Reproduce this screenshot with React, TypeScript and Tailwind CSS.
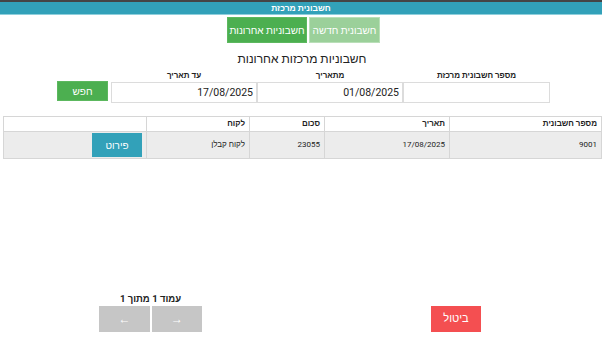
import React from "react";

export default function App() {
  const font = { fontFamily: 'Roboto, "Liberation Sans", "Open Sans", sans-serif' };
  return (
    <div dir="rtl" style={font} className="w-[602px] h-[339px] bg-white flex flex-col overflow-hidden text-[#222]">
      <div className="h-[2px] bg-[#454545] shrink-0" />
      <div className="h-[13px] bg-[#32a1b9] border-b border-[#8fcfdc] flex items-center justify-center shrink-0">
        <span className="text-white text-[8.5px] font-bold leading-none">חשבונית מרכזת</span>
      </div>
      <div className="flex justify-center gap-[2px] mt-[2px] pl-[5px]">
        <div className="w-[71px] h-[26px] bg-[#9bd09a] border border-[#b9dfb8] text-white text-[10px] whitespace-nowrap flex items-center justify-center">חשבונית חדשה</div>
        <div className="w-[80px] h-[26px] bg-[#4caf50] border border-[#5cb85f] text-white text-[10px] whitespace-nowrap flex items-center justify-center">חשבוניות אחרונות</div>
      </div>
      <div className="text-center text-[12px] leading-none mt-[10px] pl-[2px] text-[#222]">חשבוניות מרכזות אחרונות</div>
      <div className="flex items-end mt-[7px] pr-[52px]">
        <div className="w-[147px] flex flex-col items-center">
          <span className="text-[8px] font-bold leading-none mb-[2px]">מספר חשבונית מרכזת</span>
          <div className="w-full h-[21px] border border-[#dcdcdc] bg-white" />
        </div>
        <div className="w-[146px] flex flex-col items-center">
          <span className="text-[8px] font-bold leading-none mb-[2px]">מתאריך</span>
          <div className="w-full h-[21px] border border-[#dcdcdc] bg-white flex items-center px-[3px] text-[10.5px]">01/08/2025</div>
        </div>
        <div className="w-[146px] flex flex-col items-center">
          <span className="text-[8px] font-bold leading-none mb-[2px]">עד תאריך</span>
          <div className="w-full h-[21px] border border-[#dcdcdc] bg-white flex items-center px-[3px] text-[10.5px]">17/08/2025</div>
        </div>
        <div className="w-[51px] h-[20px] mr-[3px] mb-[2px] bg-[#4caf50] border border-[#5cb85f] text-white text-[10px] flex items-center justify-center">חפש</div>
      </div>
      <div className="mt-[13px] ml-[3px] border border-[#d6d6d6] text-[8px]">
        <div className="flex h-[14px] bg-white font-bold items-center">
          <div className="w-[152px] h-full border-l border-[#d6d6d6] px-[4px] flex items-center">מספר חשבונית</div>
          <div className="w-[125px] h-full border-l border-[#d6d6d6] px-[4px] flex items-center">תאריך</div>
          <div className="w-[75px] h-full border-l border-[#d6d6d6] px-[4px] flex items-center">סכום</div>
          <div className="w-[103px] h-full border-l border-[#d6d6d6] px-[4px] flex items-center">לקוח</div>
          <div className="flex-1 h-full" />
        </div>
        <div className="flex h-[27px] bg-[#ececec] border-t border-[#d6d6d6] items-center">
          <div className="w-[152px] h-full border-l border-[#d6d6d6] px-[4px] flex items-center">9001</div>
          <div className="w-[125px] h-full border-l border-[#d6d6d6] px-[4px] flex items-center">17/08/2025</div>
          <div className="w-[75px] h-full border-l border-[#d6d6d6] px-[4px] flex items-center">23055</div>
          <div className="w-[103px] h-full border-l border-[#d6d6d6] px-[4px] flex items-center">לקוח קבלן</div>
          <div className="flex-1 h-full flex items-center pr-[4px]">
            <div className="w-[50px] h-[24px] bg-[#32a1b9] text-white text-[10px] flex items-center justify-center">פירוט</div>
          </div>
        </div>
      </div>
      <div className="flex-1" />
      <div dir="ltr" className="flex items-end pl-[99px] mb-[7px]">
        <div className="w-[103px] flex flex-col items-center">
          <span dir="rtl" className="text-[9.5px] font-bold leading-none mb-[3px]">עמוד 1 מתוך 1</span>
          <div className="flex gap-[2px]">
            <div className="w-[51px] h-[26px] bg-[#c6c6c6] text-white text-[12px] flex items-center justify-center">←</div>
            <div className="w-[50px] h-[26px] bg-[#c6c6c6] text-white text-[12px] flex items-center justify-center">→</div>
          </div>
        </div>
        <div className="ml-[229px] w-[50px] h-[26px] bg-[#f44f51] text-white text-[11px] flex items-center justify-center">ביטול</div>
      </div>
    </div>
  );
}
